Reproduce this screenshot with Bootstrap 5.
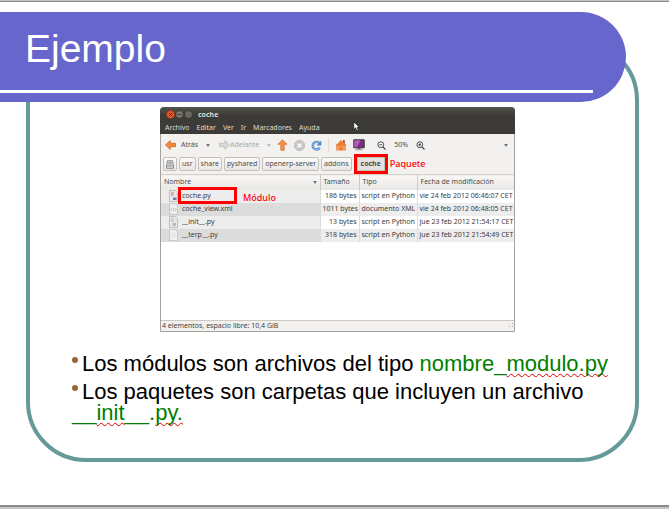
<!DOCTYPE html>
<html lang="es">
<head>
<meta charset="utf-8">
<meta name="viewport" content="width=device-width, initial-scale=1">
<title>Ejemplo</title>
<link href="https://cdn.jsdelivr.net/npm/bootstrap@5.3.0/dist/css/bootstrap.min.css" rel="stylesheet">
<style>
body { font-family: "Liberation Sans", Arial, sans-serif; background: #fff; color: #000; }
.slide { border-top: 1px solid #8a8a8a; border-bottom: 2px solid #8c8c8c; box-shadow: 0 0 0 4px #c4c4c4; margin: 1px 0 2px; min-height: calc(100vh - 3px); }
.band { z-index: 1; margin: 10px 43px 0 0; height: 90px; background: #66c; border-radius: 0 45px 45px 0; }
.band h1 { font-size: 39px; line-height: 44px; margin: 0; padding: 15px 0 0 25px; color: #fff; }
.band-rule { height: 3px; margin: 0 33px 9px 0; background: #fff; }
.frame { margin: -62px 30px 43px 26px; padding: 63px 10px 34px 42px; border: 4px solid #699; border-radius: 60px; }

.fm { width: 355px; max-width: 100%; margin-left: 88px; margin-bottom: 21px; border: 1px solid #a5a29d; border-radius: 4px 4px 0 0; background: #fff; font-family: "Noto Sans", "Open Sans", sans-serif; font-size: 7px; line-height: 10px; color: #4c4c4c; }
.fm button { border: 0; background: none; padding: 0; color: inherit; font: inherit; white-space: nowrap; }
.fm svg { display: block; flex: none; }
.fm-head { background: linear-gradient(#55534c, #3c3b37 8px); margin: -1px -1px 0; border-radius: 4px 4px 0 0; height: 27px; color: #dfdbd2; }
.fm-title { height: 15px; padding-left: 6px; }
.fm-title strong { margin-left: 5px; }
.fm-menu { gap: 7px; height: 12px; padding-left: 5px; }
.fm-pointer { left: 193px; top: 14px; }
.fm-tools { background: #f2f1f0; height: 22px; padding: 0 6px 0 4px; }
.fm-tools .off { color: #aaa8a5; }
.tool-set { gap: 6px; margin-left: 6px; }
.zoom-set { gap: 8px; margin-left: 12px; }
.caret { width: 0; height: 0; border: 2px solid transparent; border-top: 3px solid #777; border-bottom: 0; }
.off .caret { border-top-color: #bbb; }
.tool-sep { width: 1px; height: 14px; background: #dedbd8; }
.fm-path { background: #f2f1f0; height: 18px; gap: 2px; padding: 0 2px 2px; }
.fm-path button { height: 14px; padding: 0 2px; border: 1px solid #c3bfba; border-radius: 2px; background: linear-gradient(#fbfafa, #e9e7e5); }
.fm-path .here { margin: 0 3px; padding: 0 3px; border-radius: 0; font-weight: bold; background: #e4e2df; outline: 3px solid #f00; }
.note { color: #f00; font-size: 9px; line-height: 12px; font-weight: 500; }
.fm-list { width: 100%; table-layout: fixed; border-collapse: collapse; margin-bottom: 78px; }
.fm-list th { height: 15px; padding: 0 3px; font-weight: normal; background: linear-gradient(#f8f7f6, #e9e7e4); border-top: 1px solid #d5d1cc; border-right: 1px solid #cfcbc6; }
.fm-list td { height: 13px; padding: 0 2px; white-space: nowrap; border-right: 1px solid #dcdcdc; color: #3c3c3c; }
.fm-list th:last-child, .fm-list td:last-child { border-right: 0; }
.fm-list td:first-child { background: #ededed; padding-left: 8px; }
.fm-list tr:nth-child(even) td { background: #ededed; }
.fm-list tr:nth-child(even) td:first-child { background: #dcdcdc; }
.c-name { width: 159px; } .c-size { width: 39px; } .c-type { width: 58px; }
.ring { left: 9px; top: -3px; width: 59px; height: 17px; border: 3px solid #f00; }
.ring-note { left: 74px; top: 2px; }
.fm-status { background: #f2f1f0; border-top: 1px solid #cdc9c0; height: 11px; padding: 0 1px; color: #444; }

.points { font-size: 22px; line-height: 21px; }
.points li + li { margin-top: 7px; }
.dot { display: inline-block; width: 6px; height: 6px; margin-right: 4px; border-radius: 50%; background: #963; vertical-align: 8px; }
.code { color: #008000; }
.wavy { text-decoration: underline wavy #e00000 1px; text-underline-offset: 2px; text-decoration-skip-ink: none; }
</style>
<script src="https://cdn.jsdelivr.net/npm/bootstrap@5.3.0/dist/js/bootstrap.bundle.min.js"></script>
</head>
<body>
<main class="slide d-flex flex-column">
  <header class="band position-relative d-flex flex-column justify-content-between">
    <h1 class="fw-normal">Ejemplo</h1>
    <div class="band-rule"></div>
  </header>

  <section class="frame flex-grow-1">
    <div class="fm">
      <div class="fm-head position-relative">
        <div class="fm-title d-flex align-items-center">
          <button type="button" aria-label="Cerrar"><svg width="9" height="9" viewBox="0 0 9 9"><circle cx="4.500" cy="4.500" r="4" fill="#e8572b" stroke="#7a2f14" stroke-width=".6"/><path d="M3 3l3 3M6 3L3 6" stroke="#6b2008"/></svg></button>
          <button type="button" aria-label="Minimizar"><svg width="9" height="9" viewBox="0 0 9 9"><circle cx="4.500" cy="4.500" r="3.800" fill="#7b7970" stroke="#2f2e2a" stroke-width=".6"/><path d="M2.500 4.500h4" stroke="#3c3b37"/></svg></button>
          <button type="button" aria-label="Maximizar"><svg width="9" height="9" viewBox="0 0 9 9"><circle cx="4.500" cy="4.500" r="3.800" fill="#747269" stroke="#2f2e2a" stroke-width=".6"/><path d="M3 3h3v3H3z" fill="none" stroke="#5b5952" stroke-width=".7"/></svg></button>
          <strong>coche</strong>
        </div>
        <nav class="fm-menu d-flex align-items-center" aria-label="Menú">
          <button type="button">Archivo</button><button type="button">Editar</button><button type="button">Ver</button><button type="button">Ir</button><button type="button">Marcadores</button><button type="button">Ayuda</button>
        </nav>
        <svg class="fm-pointer position-absolute" width="7" height="11" viewBox="0 0 7 11"><path d="M.8.800v7.700l1.800-1.600 1.300 3 1.500-.7-1.300-2.800h2.400z" fill="#fff" stroke="#111" stroke-width=".7"/></svg>
      </div>

      <div class="fm-tools d-flex align-items-center">
        <button type="button" class="d-flex align-items-center"><svg width="12" height="10" viewBox="0 0 12 10"><path d="M.5 5L5.200.600v2.700h5.300v3.400H5.200v2.700z" fill="#f08a3c" stroke="#c65f18" stroke-width=".7"/></svg><span class="ms-1">Atrás</span></button>
        <button type="button" class="ms-2" aria-label="Historial atrás"><span class="caret d-block"></span></button>
        <button type="button" class="off d-flex align-items-center ms-2" disabled><svg width="12" height="10" viewBox="0 0 12 10"><path d="M11.500 5L6.800.600v2.700H1.500v3.400h5.300v2.700z" fill="#d9d7d4" stroke="#bab7b3" stroke-width=".7"/></svg><span>Adelante</span></button>
        <button type="button" class="off ms-2" disabled aria-label="Historial adelante"><span class="caret d-block"></span></button>
        <div class="tool-set d-flex align-items-center">
          <button type="button" aria-label="Subir"><svg width="11" height="12" viewBox="0 0 11 12"><path d="M5.500.700l4.500 4.600H7.200v5.900H3.800V5.300H1z" fill="#f2914a" stroke="#cf6a24" stroke-width=".7"/></svg></button>
          <button type="button" disabled aria-label="Detener"><svg width="11" height="11" viewBox="0 0 11 11"><path d="M3.400.600h4.200l2.800 2.800v4.200l-2.800 2.800H3.400L.600 7.600V3.400z" fill="#c9c7c5" stroke="#b5b3b0" stroke-width=".7"/><path d="M3.500 3.500l4 4M7.500 3.500l-4 4" stroke="#fff" stroke-width="1.300"/></svg></button>
          <button type="button" aria-label="Recargar"><svg width="11" height="11" viewBox="0 0 11 11"><path d="M8.200 2.900A3.800 3.800 0 1 0 8.700 7.800" fill="none" stroke="#3e7cba" stroke-width="2.400"/><path d="M8.200 2.900A3.800 3.800 0 1 0 8.700 7.800" fill="none" stroke="#8bbdea" stroke-width="1.200"/><path d="M10.300.400v5H5.500z" fill="#4a88c6"/></svg></button>
          <span class="tool-sep"></span>
          <button type="button" aria-label="Carpeta personal"><svg width="12" height="12" viewBox="0 0 12 12"><path d="M8 1h1.800v4H8z" fill="#b85416"/><path d="M1.500 5.500h9v5.700h-9z" fill="#f59b58" stroke="#d97a35" stroke-width=".5"/><path d="M6 1L.400 6.700h11.200z" fill="#ec7e33"/><path d="M4.800 7.800h2.400v3.400H4.800z" fill="#e1782f"/></svg></button>
          <button type="button" aria-label="Equipo"><svg width="12" height="12" viewBox="0 0 12 12"><path d="M.800.800h10.400v8H.800z" fill="#7a2c80" stroke="#39363b"/><path d="M1.300 1.300h6.500L4 8.300H1.300z" fill="#b05bb4"/><path d="M4.500 9h3v1h-3z" fill="#666"/><path d="M2.500 10h7v1.300h-7z" fill="#a9a6a6"/></svg></button>
        </div>
        <div class="zoom-set d-flex align-items-center">
          <button type="button" aria-label="Reducir"><svg width="9" height="9" viewBox="0 0 9 9"><circle cx="3.800" cy="3.700" r="2.900" fill="#fff" stroke="#444"/><path d="M2.400 3.700h2.800M6 6l2.500 2.500" stroke="#444" stroke-width="1.100"/></svg></button>
          <span>50%</span>
          <button type="button" aria-label="Ampliar"><svg width="9" height="9" viewBox="0 0 9 9"><circle cx="3.800" cy="3.700" r="2.900" fill="#fff" stroke="#444"/><path d="M2.300 3.700h3M3.800 2.200v3M6 6l2.500 2.500" stroke="#444" stroke-width="1.100"/></svg></button>
        </div>
        <button type="button" class="ms-auto" aria-label="Vista"><span class="caret d-block"></span></button>
      </div>

      <nav class="fm-path d-flex align-items-center" aria-label="Ruta">
        <button type="button" aria-label="Sistema de archivos"><svg width="8" height="9" viewBox="0 0 8 9"><path d="M1.500.700h5l1 5.300v2.300h-7V6z" fill="#dcdcdc" stroke="#777" stroke-width=".8"/><path d="M.500 6h7M2.500 2.500h3M2.300 4h3.400" stroke="#777" stroke-width=".7"/></svg></button>
        <button type="button">usr</button>
        <button type="button">share</button>
        <button type="button">pyshared</button>
        <button type="button">openerp-server</button>
        <button type="button">addons</button>
        <button type="button" class="here">coche</button>
        <span class="note">Paquete</span>
      </nav>

      <table class="fm-list">
        <thead>
          <tr><th class="c-name" scope="col"><span class="d-flex justify-content-between align-items-center">Nombre <span class="caret"></span></span></th><th class="c-size" scope="col">Tamaño</th><th class="c-type" scope="col">Tipo</th><th scope="col">Fecha de modificación</th></tr>
        </thead>
        <tbody>
          <tr><td><div class="d-flex align-items-center position-relative"><svg class="me-1" width="9" height="12" viewBox="0 0 9 12"><path d="M.500.500h5.700l2.300 2.300v8.700h-8z" fill="#e8e8e8" stroke="#aaa" stroke-width=".7"/><path d="M2 3h3M2 5h2.500" stroke="#b55" stroke-width=".8"/><path d="M4 7.500h3.500v2.500H4z" fill="#6d7fa8"/></svg>coche.py<span class="ring position-absolute"></span><span class="note ring-note position-absolute">Módulo</span></div></td><td class="text-end">186 bytes</td><td>script en Python</td><td>vie 24 feb 2012 06:46:07 CET</td></tr>
          <tr><td><div class="d-flex align-items-center"><svg class="me-1" width="9" height="12" viewBox="0 0 9 12"><path d="M.500.500h5.700l2.300 2.300v8.700h-8z" fill="#eee" stroke="#bbb" stroke-width=".7"/><path d="M3 5L1.700 6.500 3 8M6 5l1.300 1.500L6 8M5 4.800L4 8.200" fill="none" stroke="#aaa" stroke-width=".6"/></svg>coche_view.xml</div></td><td class="text-end">1011 bytes</td><td>documento XML</td><td>vie 24 feb 2012 06:48:05 CET</td></tr>
          <tr><td><div class="d-flex align-items-center"><svg class="me-1" width="9" height="12" viewBox="0 0 9 12"><path d="M.500.500h5.700l2.300 2.300v8.700h-8z" fill="#e8e8e8" stroke="#aaa" stroke-width=".7"/><path d="M2 3h3M2 5h2.500" stroke="#aaa" stroke-width=".8"/><path d="M3.500 7h3.500v3H3.500z" fill="#c9b4bd"/></svg>__init__.py</div></td><td class="text-end">13 bytes</td><td>script en Python</td><td>jue 23 feb 2012 21:54:17 CET</td></tr>
          <tr><td><div class="d-flex align-items-center"><svg class="me-1" width="9" height="12" viewBox="0 0 9 12"><path d="M.500.500h5.700l2.300 2.300v8.700h-8z" fill="#efefef" stroke="#bbb" stroke-width=".7"/><path d="M2 4h4M2 6h5M2 8h4" stroke="#d8d8d8" stroke-width=".7"/></svg>__terp__.py</div></td><td class="text-end">318 bytes</td><td>script en Python</td><td>jue 23 feb 2012 21:54:49 CET</td></tr>
        </tbody>
      </table>
      <div class="fm-status d-flex align-items-center justify-content-between"><span>4 elementos, espacio libre: 10,4 GiB</span><svg width="5" height="5" viewBox="0 0 5 5"><path d="M4 0h1v1H4zM4 3h1v1H4zM1 3h1v1H1z" fill="#aaa"/></svg></div>
    </div>

    <ul class="points list-unstyled mb-0">
      <li><span class="dot"></span>Los módulos son archivos del tipo <span class="code">nombre_<span class="wavy">modulo.py</span></span></li>
      <li><span class="dot"></span>Los paquetes son carpetas que incluyen un archivo <span class="code">__<span class="wavy">init</span>__.<span class="wavy">py.</span></span></li>
    </ul>
  </section>
</main>
</body>
</html>
